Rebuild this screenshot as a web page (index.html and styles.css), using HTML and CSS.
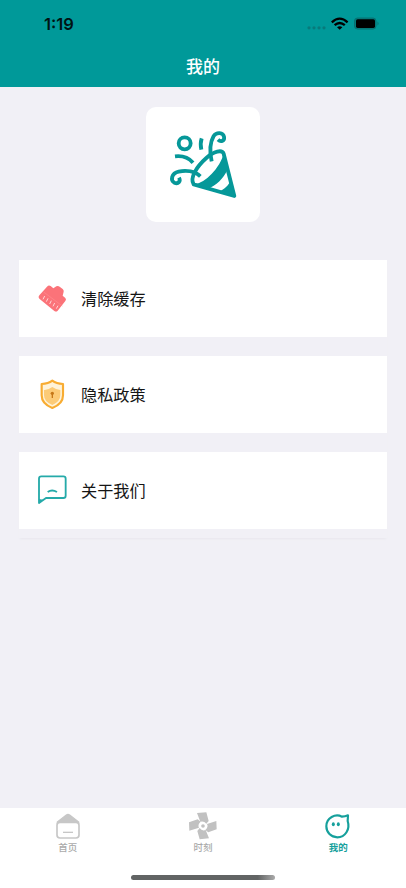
FILE: index.html
```html
<!DOCTYPE html>
<html lang="zh-CN">
<head>
<meta charset="utf-8">
<title>我的</title>
<link rel="stylesheet" href="styles.css">
</head>
<body>
<div class="screen">
  <header class="header">
    <div class="status">
      <span class="time">1:19</span>
      <svg class="status-icons" width="74" height="16" viewBox="0 0 74 16">
        <g fill="#087a7b"><circle cx="3" cy="11.8" r="1.6"/><circle cx="8" cy="11.8" r="1.6"/><circle cx="13" cy="11.8" r="1.6"/><circle cx="18" cy="11.8" r="1.6"/></g>
        <g fill="none" stroke="#000" stroke-width="2.3"><path d="M25.8 6.3Q33.700 -1 41.600 6.300"/><path d="M28.600 9.200Q33.700 4.700 38.800 9.200"/></g>
        <path d="M31 11.200Q33.700 9.300 36.400 11.200L33.700 13.700Z"/>
        <rect x="48.500" y="2" width="21.500" height="11" rx="3" fill="#007e7e" stroke="#087172" stroke-width="1"/>
        <rect x="50" y="3.300" width="19" height="8.600" rx="1.600"/>
        <path d="M71.500 5.500q2.200 2 0 4z" fill="#087172"/>
      </svg>
    </div>
    <h1 class="title">我的</h1>
  </header>
  <main class="content">
    <div class="logo">
      <svg width="114" height="115" viewBox="18 21 342 345" fill="none" stroke="#069899" stroke-width="11.500">
        <circle cx="134" cy="130" r="18"/>
        <path d="M185 115Q180 130 184 149"/>
        <path d="M105 169Q139 165 159 188"/>
        <path d="M215 184C209 157 210 127 221 108C230 95 249 97 252 110C255 122 243 128 234 119"/>
        <path d="M181 229C165 214 139 210 116 215C94 220 91 241 103 248C115 253 123 244 117 233"/>
        <path d="M161 253C148 233 171 199 199 174C222 153 246 148 251 161L283 288Z" stroke-linejoin="round"/>
        <path d="M161 253C185 254 232 217 250 166L262 210C251 235 228 258 203 266Z" fill="#069899" stroke="none"/>
        <path d="M237 275C253 268 268 255 272 240L286 290Z" fill="#069899" stroke="none"/>
      </svg>
    </div>
    <nav class="menu">
      <a class="row">
        <svg class="row-icon" width="30" height="30" viewBox="0 0 90 90">
          <path d="M7 37L30 11Q35 5 41 9L49 16L58 10Q63 7 68 11L77 18Q81 21 80 26L77 38L85 45Q89 49 85 54L62 83Q58 88 52 84L7 47Q2 43 7 37Z" fill="#fb7379"/>
          <path d="M20 27L76 69" stroke="#ff8b8f" stroke-width="2"/>
          <path d="M23 39l-5 10M33 46l-5 10M43 53l-5 10M53 60l-5 10M63 68l-5 9" stroke="#ffd5d6" stroke-width="3"/>
        </svg>
        <span>清除缓存</span>
      </a>
      <a class="row">
        <svg class="row-icon" width="30" height="30" viewBox="0 0 90 90">
          <path d="M46 5Q58 14 78 15V49Q78 75 46 87Q14 75 14 49V15Q34 14 46 5Z" fill="#fff3d9" stroke="#f8ac32" stroke-width="6.500" stroke-linejoin="round"/>
          <path d="M23 33Q35 32 46 24Q57 32 70 33V49Q70 68 46 78Q21 68 21 49V33Z" fill="#fccb77"/>
          <circle cx="46" cy="43" r="5" fill="#c67818"/><path d="M46 44V57" stroke="#c67818" stroke-width="4"/>
        </svg>
        <span>隐私政策</span>
      </a>
      <a class="row">
        <svg class="row-icon" width="30" height="30" viewBox="0 0 90 90" fill="none" stroke="#25aaa9" stroke-width="5.500">
          <path d="M6 84V11Q6 4 13 4H79Q86 4 86 11V62Q86 69 79 69H27Z" stroke-linejoin="round"/>
          <path d="M32 51Q45 42 60 51"/>
          <path d="M6 72V85L19 74Z" fill="#25aaa9" stroke="none"/>
        </svg>
        <span>关于我们</span>
      </a>
    </nav>
  </main>
  <footer class="tabs">
    <a class="tab">
      <svg width="30" height="28" viewBox="0 0 90 84">
        <path d="M13 30L40 9Q45 6 50 9L77 30V34H13Z" fill="#c7c7c7" stroke="#c7c7c7" stroke-width="4"/>
        <rect x="12" y="31" width="66" height="47" rx="9" fill="#fff" stroke="#c7c7c7" stroke-width="5"/>
        <path d="M30 61H60" stroke="#c7c7c7" stroke-width="4"/>
      </svg>
      <span>首页</span>
    </a>
    <a class="tab">
      <svg width="30" height="28" viewBox="0 0 90 84" fill="#c1c1c1">
        <path d="M27 3L55 1L62 27L55 35Q48 26 37 29Z"/>
        <path d="M85 27L86 52L61 61L52 54Q62 45 57 36Z"/>
        <path d="M63 79L35 82L28 57L35 48Q42 58 53 54Z"/>
        <path d="M4 56L3 31L29 22L38 29Q28 38 33 47Z"/>
        <circle cx="45" cy="42" r="5.500"/>
      </svg>
      <span>时刻</span>
    </a>
    <a class="tab active">
      <svg width="30" height="28" viewBox="0 0 90 84">
        <path d="M57 14Q66 14 75 10L74 27C82 52 67 76 43 76C24 76 10 61 10 43C10 17 37 4 57 14Z" fill="none" stroke="#16a09c" stroke-width="6.500" stroke-linejoin="round"/>
        <ellipse cx="31" cy="37" rx="4.500" ry="6" fill="#16a09c"/><ellipse cx="46" cy="37" rx="4.500" ry="6" fill="#16a09c"/>
      </svg>
      <span>我的</span>
    </a>
    <div class="home-indicator"></div>
  </footer>
</div>
</body>
</html>
```

FILE: styles.css
```css
* { box-sizing: border-box; }
body {
  margin: 0;
  font-family: Inter, "Noto Sans CJK SC", sans-serif;
  background: #f1f0f6;
}
.screen {
  width: 406px;
  height: 888px;
  display: flex;
  flex-direction: column;
  overflow: hidden;
}
.header {
  height: 87px;
  flex: none;
  background: #009999;
}
.status {
  height: 46px;
  padding: 0 26px 0 44px;
  display: flex;
  align-items: center;
  justify-content: space-between;
}
.time {
  font-size: 16.5px;
  line-height: 20px;
  font-weight: 600;
  color: #001414;
  padding-top: 2px;
}
.status-icons { display: block; margin-top: 1px; }
.title {
  margin: 8px 0 0;
  font-size: 17px;
  line-height: 26px;
  font-weight: 500;
  color: #fff;
  text-align: center;
}
.content {
  flex: 1;
  padding: 20px 19px 0;
}
.logo {
  width: 114px;
  height: 115px;
  margin: 0 auto 38px;
  border-radius: 10px;
  background: #fff;
  overflow: hidden;
}
.logo svg { display: block; }
.menu {
  display: flex;
  flex-direction: column;
  gap: 19px;
  padding-bottom: 9px;
  box-shadow: 0 2px 2px -1px #e8e7ed;
}
.row {
  height: 77px;
  padding-left: 18px;
  display: flex;
  align-items: center;
  gap: 14px;
  background: #fff;
  color: #151515;
  font-size: 16.2px;
  line-height: 24px;
}
.row-icon { display: block; flex: none; margin-bottom: 1px; }
.tabs {
  position: relative;
  height: 80px;
  flex: none;
  display: flex;
  background: #fff;
}
.tab {
  flex: 1;
  display: flex;
  flex-direction: column;
  align-items: center;
  padding-top: 4px;
  font-size: 9.5px;
  line-height: 14px;
  font-weight: 500;
  color: #aaa;
}
.tab svg { display: block; margin-bottom: 1px; }
.tab.active { color: #16a09c; font-weight: 700; }
.home-indicator {
  position: absolute;
  left: 131px;
  bottom: 8px;
  width: 144px;
  height: 5px;
  border-radius: 3px;
  background: linear-gradient(90deg, #626464 88%, #aaa);
}
```
